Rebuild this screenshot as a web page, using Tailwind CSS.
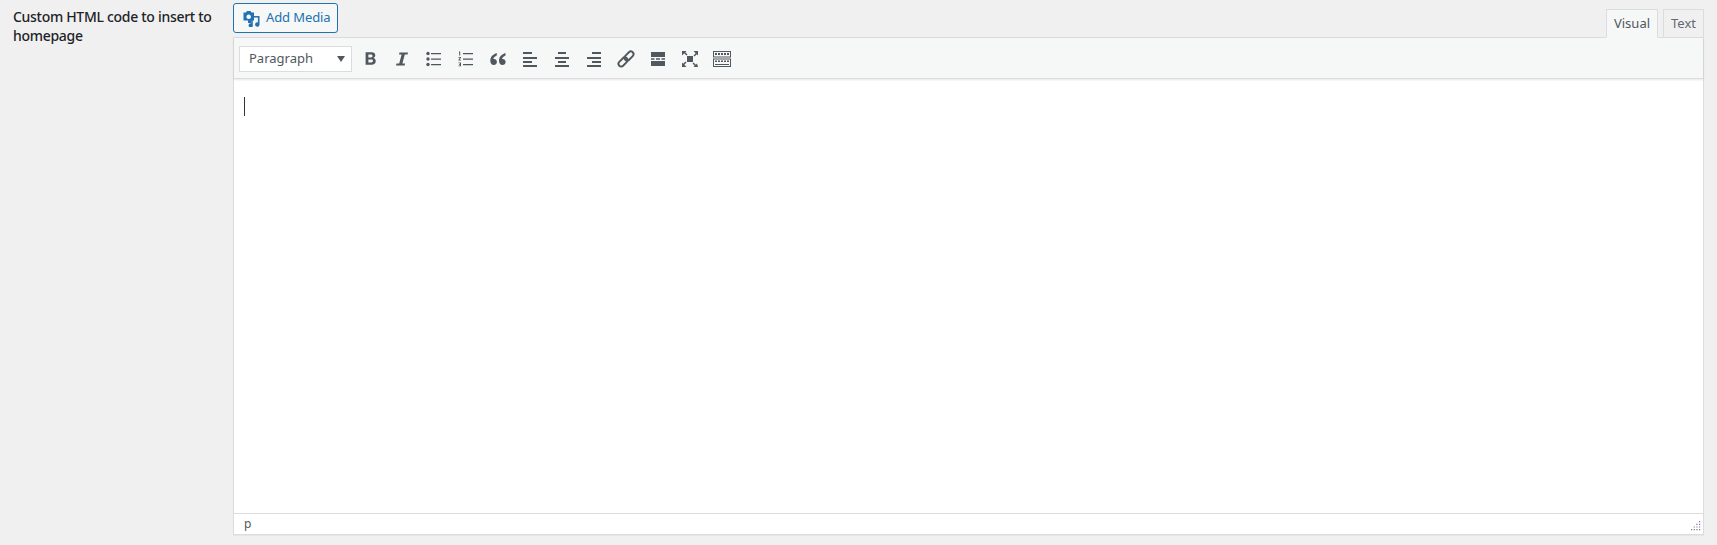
<!DOCTYPE html>
<html lang="en">
<head>
<meta charset="utf-8">
<title>Editor</title>
<script src="https://cdn.jsdelivr.net/npm/@tailwindcss/browser@4"></script>
</head>
<body class="m-0 bg-[#f0f0f1] font-['Noto_Sans','Open_Sans',sans-serif] overflow-hidden">
<div class="flex w-[1717px] h-[545px] pr-[13px]">
  <div class="w-[233px] shrink-0 pl-[13px] pt-[7px] pr-[15px]">
    <label class="block text-[14px] leading-[19px] font-medium text-[#1d2327] tracking-[-0.3px]">Custom HTML code to insert to homepage</label>
  </div>
  <div class="flex-1 flex flex-col">
    <div class="flex justify-between h-[37px] pt-[3px] relative z-10">
      <button class="flex items-center gap-[5px] h-[30px] w-[105px] pl-[9px] border border-[#2271b1] rounded-[3px] bg-[#f6f7f7] text-[#2271b1] text-[13px] tracking-[-0.1px]">
        <svg class="w-[18px] h-[18px]" viewBox="0 0 18 18" fill="#2271b1" fill-rule="evenodd"><path d="M0.500 3.500h2.500l1-1.500h3.500l1 1.500h2.500v8H8V14H5v-2.500H0.500zM5.700 5.500a2.300 2.300 0 1 0 .01 0z"/><path d="M11 7h5.500v8.500a2.200 2.200 0 1 1-1.600-2.100V8.500H11zM9.800 11v5.300a2.100 2.100 0 1 1-1.600-2V11z"/></svg>
        <span>Add Media</span>
      </button>
      <div class="flex items-end gap-[5px]">
        <div class="h-[29px] w-[52px] -mb-px flex items-center justify-center border border-[#dcdcde] border-b-[#f6f7f7] bg-[#f6f7f7] text-[13px] text-[#50575e]">Visual</div>
        <div class="h-[29px] w-[41px] -mb-px flex items-center justify-center border border-[#dcdcde] bg-[#f0f0f1] text-[13px] text-[#646970]">Text</div>
      </div>
    </div>
    <div class="w-[1471px] h-[498px] flex flex-col border border-[#dcdcde] bg-white shadow-[0_1px_1px_rgba(0,0,0,0.04)]">
      <div class="h-[41px] shrink-0 flex items-center pl-[5px] pt-px bg-[#f6f7f7] border-b border-[#dcdcde] shadow-[0_1px_2px_rgba(0,0,0,0.1)]">
        <div class="w-[113px] h-[26px] flex items-center justify-between pl-[9px] pr-[5px] bg-white border border-[#dcdcde] text-[13px] text-[#50575e]">
          <span>Paragraph</span>
          <span class="w-0 h-0 border-x-[4px] border-x-transparent border-t-[6px] border-t-[#50575e] mr-[1px]"></span>
        </div>
        <div class="flex items-center ml-[2px] text-[#50575e]">
          <span class="w-8 h-6 flex items-center justify-center"><svg class="w-5 h-5" viewBox="0 0 20 20" fill="currentColor" fill-rule="evenodd"><path d="M5 3h6.500c2.600 0 4 1.300 4 3.300 0 1.500-.8 2.600-2.200 3 1.700.3 2.700 1.600 2.700 3.400 0 2.500-1.700 3.800-4.500 3.800H5zM8 5.400v3.200h2.700c1.200 0 1.800-.6 1.800-1.600s-.6-1.600-1.800-1.600zM8 11v3.100h3c1.300 0 2-.6 2-1.600s-.7-1.500-2-1.500z" transform="translate(1 0.500) scale(0.92)"/></svg></span>
          <span class="w-8 h-6 flex items-center justify-center"><svg class="w-5 h-5" viewBox="0 0 20 20" fill="currentColor"><path d="M7.500 3.500h8.500l-.4 2h-2.800l-2.400 9h2.700l-.5 2H4l.5-2h2.700l2.400-9H7z"/></svg></span>
          <span class="w-8 h-6 flex items-center justify-center"><svg class="w-5 h-5" viewBox="0 0 20 20" fill="currentColor"><circle cx="4" cy="4.500" r="1.700"/><circle cx="4" cy="10" r="1.700"/><circle cx="4" cy="15.500" r="1.700"/><path d="M7 4h10v1.200H7zM7 9.500h10v1.200H7zM7 15h10v1.200H7z"/></svg></span>
          <span class="w-8 h-6 flex items-center justify-center"><svg class="w-5 h-5" viewBox="0 0 20 20" fill="currentColor"><path d="M7 4h10v1.200H7zM7 9.500h10v1.200H7zM7 15h10v1.200H7z"/><path d="M3 2.500h1.200v4H3.200V3.400H3zM2.500 8h2.500v.8L3.500 10.700H5v.8H2.400v-.8L4 8.800H2.500zM2.500 13.500H5v3.800H2.500v-.8H4v-.7H3v-.7h1v-.8H2.500z"/></svg></span>
          <span class="w-8 h-6 flex items-center justify-center"><svg class="w-5 h-5" viewBox="0 0 20 20" fill="currentColor"><path d="M8.800 4C5 5.200 2.300 7.700 2.300 11.800c0 2.500 1.400 4.200 3.400 4.200 1.800 0 3.200-1.400 3.200-3.100 0-1.800-1.300-3-2.900-3-.2 0-.5 0-.7.100.3-1.500 1.600-2.900 3.500-3.600zM17.500 4c-3.800 1.200-6.500 3.700-6.500 7.800 0 2.500 1.400 4.200 3.400 4.200 1.800 0 3.200-1.400 3.200-3.100 0-1.800-1.300-3-2.900-3-.2 0-.5 0-.7.100.3-1.500 1.600-2.900 3.500-3.600z"/></svg></span>
          <span class="w-8 h-6 flex items-center justify-center"><svg class="w-5 h-5" viewBox="0 0 20 20" fill="currentColor"><path d="M3 3h9v2H3zM3 8h14v2H3zM3 12h9v2H3zM3 16h14v2H3z"/></svg></span>
          <span class="w-8 h-6 flex items-center justify-center"><svg class="w-5 h-5" viewBox="0 0 20 20" fill="currentColor"><path d="M6 3h8v2H6zM3 8h14v2H3zM6 12h8v2H6zM3 16h14v2H3z"/></svg></span>
          <span class="w-8 h-6 flex items-center justify-center"><svg class="w-5 h-5" viewBox="0 0 20 20" fill="currentColor"><path d="M8 3h9v2H8zM3 8h14v2H3zM8 12h9v2H8zM3 16h14v2H3z"/></svg></span>
          <span class="w-8 h-6 flex items-center justify-center"><svg class="w-5 h-5" viewBox="0 0 20 20" fill="none" stroke="currentColor" stroke-width="1.900"><g transform="rotate(-45 10 10)"><rect x="0.500" y="7.300" width="10.500" height="5.400" rx="2.700"/><rect x="9" y="7.300" width="10.500" height="5.400" rx="2.700"/></g></svg></span>
          <span class="w-8 h-6 flex items-center justify-center"><svg class="w-5 h-5" viewBox="0 0 20 20" fill="currentColor"><path d="M3 3h14v5H3zM3 9.300h3.500v1.400H3zM8 9.300h4v1.400H8zM13.500 9.300H17v1.400h-3.500zM3 12h14v5H3z"/></svg></span>
          <span class="w-8 h-6 flex items-center justify-center"><svg class="w-5 h-5" viewBox="0 0 20 20" fill="currentColor"><path d="M7 7h6v6H7zM2 2h4.500L5.300 3.200l2.200 2.200-1.100 1.100-2.200-2.200L3 5.500 2 6.500zM18 2v4.500l-1.200-1.200-2.200 2.200-1.100-1.100 2.200-2.200L13.500 2zM2 18v-4.500l1.200 1.200 2.200-2.200 1.100 1.100-2.200 2.200L6.500 18zM18 18h-4.500l1.200-1.200-2.200-2.200 1.100-1.100 2.200 2.200 1.200-1.200z"/></svg></span>
          <span class="w-8 h-6 flex items-center justify-center"><svg class="w-[20px] h-[20px]" viewBox="0 0 20 20" fill="currentColor" fill-rule="evenodd"><path d="M1 2h18v6.500H1zM2 3v4.500h16V3zM3 4h2v2H3zM6 4h2v2H6zM9 4h2v2H9zM12 4h2v2h-2zM15 4h2v2h-2zM1 9.500h18V18H1zM2 10.500V17h16v-6.500zM3 11.500h2V13H3zM6 11.500h2V13H6zM9 11.500h2V13H9zM12 11.500h2V13h-2zM15 11.500h2V13h-2zM3 15h14v1H3z"/></svg></span>
        </div>
      </div>
      <div class="flex-1 pt-[18px] pl-[10px]">
        <div class="w-px h-[19px] bg-[#2c3338]"></div>
      </div>
      <div class="h-[21px] shrink-0 relative flex items-center pl-[10px] border-t border-[#dcdcde] text-[12px] text-[#50575e]">
        <span>p</span>
        <svg class="absolute right-[2px] bottom-[3px] w-[10px] h-[10px]" viewBox="0 0 10 10" fill="#8f6f9f">
          <path d="M8 0h1.200v1.200H8zM8 2.700h1.200v1.200H8zM5.300 2.700h1.200v1.200H5.300zM8 5.400h1.200v1.200H8zM5.300 5.400h1.200v1.200H5.300zM2.700 5.400h1.200v1.200H2.700zM8 8h1.200v1.200H8zM5.300 8h1.200v1.200H5.300zM2.700 8h1.200v1.200H2.700zM0 8h1.200v1.200H0z"/>
        </svg>
      </div>
    </div>
  </div>
</div>
</body>
</html>
